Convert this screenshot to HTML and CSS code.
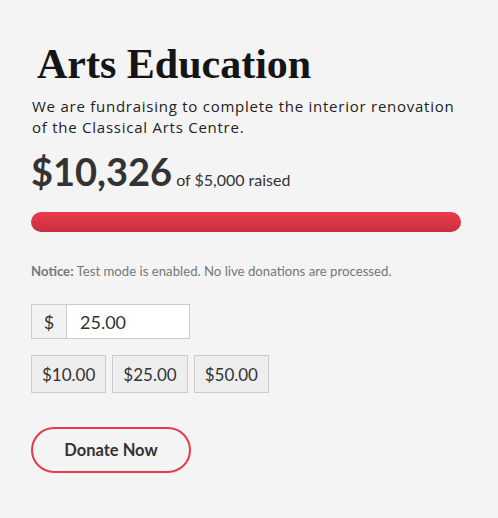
FILE: index.html
```html
<!DOCTYPE html>
<html>
<head>
<meta charset="utf-8">
<link rel="stylesheet" href="styles.css">
</head>
<body>
<div class="form">
  <h1 class="title">Arts Education</h1>
  <p class="desc">We are fundraising to complete the interior renovation of the Classical Arts Centre.</p>
  <div class="goal">
    <span class="raised">$10,326</span>
    <span class="of">of $5,000 raised</span>
  </div>
  <div class="bar"><div class="fill"></div></div>
  <p class="notice"><strong>Notice:</strong> Test mode is enabled. No live donations are processed.</p>
  <div class="amount">
    <span class="cur">$</span>
    <span class="val">25.00</span>
  </div>
  <div class="levels">
    <button class="lvl">$10.00</button>
    <button class="lvl">$25.00</button>
    <button class="lvl">$50.00</button>
  </div>
  <button class="donate">Donate Now</button>
</div>
</body>
</html>
```
FILE: styles.css
```css
html, body {
  margin: 0;
  padding: 0;
  background: #f4f4f4;
}
.form {
  padding: 36px 0 0 31px;
  width: 430px;
}
.title {
  margin: 0 0 0 6px;
  font-family: "Liberation Serif", serif;
  font-weight: bold;
  font-size: 42px;
  line-height: 56px;
  color: #151515;
}
.desc {
  margin: 4px 0 0 1px;
  max-width: 428px;
  font-family: "Open Sans", sans-serif;
  font-size: 15px;
  line-height: 21px;
  color: #222;
  letter-spacing: 0.75px;
}
.goal {
  margin-top: 9px;
  display: flex;
  align-items: baseline;
  gap: 4px;
  font-family: Lato, sans-serif;
  color: #333;
}
.raised {
  font-size: 38px;
  font-weight: bold;
  line-height: 48px;
}
.of {
  font-size: 16px;
}
.bar {
  margin-top: 17px;
  height: 20px;
  border-radius: 10px;
  overflow: hidden;
}
.fill {
  height: 100%;
  width: 100%;
  background: linear-gradient(#eb3b4b, #c8303f);
}
.notice {
  margin: 31px 0 0 0;
  font-family: Lato, sans-serif;
  font-size: 13.2px;
  color: #777;
}
.notice strong {
  font-weight: bold;
}
.amount {
  margin-top: 25px;
  display: flex;
  width: 159px;
  height: 35px;
  border: 1px solid #ccc;
  box-sizing: border-box;
  font-family: Lato, sans-serif;
  font-size: 18px;
  color: #333;
}
.cur {
  width: 34px;
  display: flex;
  align-items: center;
  justify-content: center;
  background: #f2f2f2;
  border-right: 1px solid #ccc;
}
.val {
  flex: 1;
  background: #fff;
  display: flex;
  align-items: center;
  padding-left: 13px;
}
.levels {
  margin-top: 16px;
  display: flex;
  gap: 6px;
}
.lvl {
  height: 38px;
  padding: 0 10px;
  border: 1px solid #ccc;
  background: #eee;
  font-family: Lato, sans-serif;
  font-size: 17px;
  color: #333;
  margin: 0;
}
.donate {
  margin-top: 34px;
  width: 160px;
  height: 46px;
  border: 2px solid #e83a4a;
  border-radius: 23px;
  background: transparent;
  font-family: Lato, sans-serif;
  font-weight: bold;
  font-size: 16.5px;
  color: #333;
}
```
